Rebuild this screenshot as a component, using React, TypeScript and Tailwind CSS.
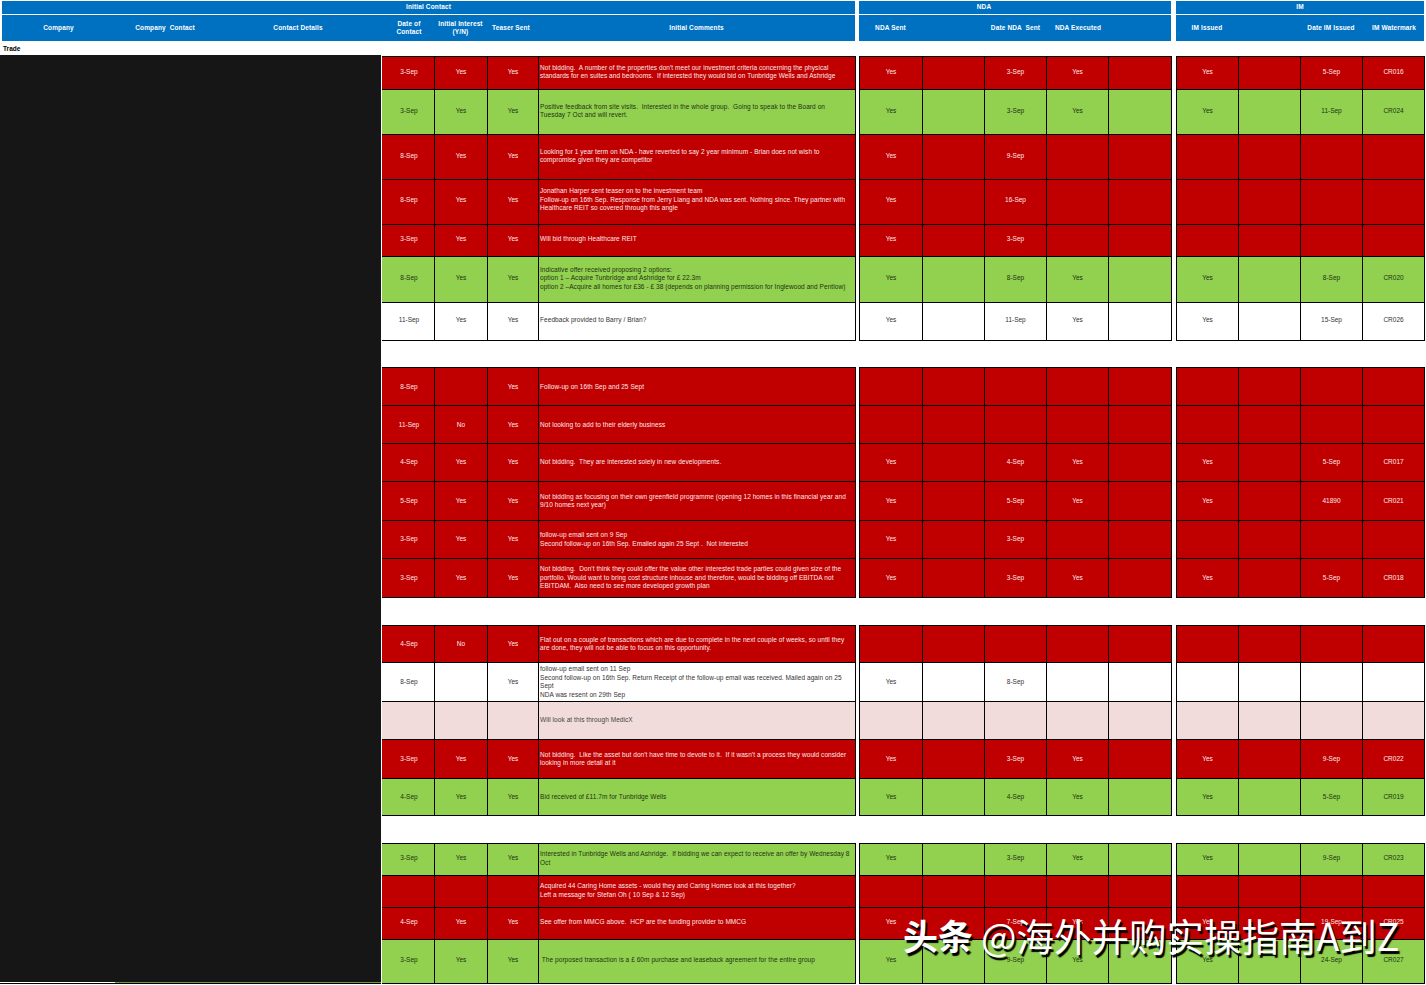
const FONT = "font-['Liberation_Sans',Arial,sans-serif]";

type Row = {
  h: string;
  t: "red" | "green" | "white" | "pink";
  c: string[];
  comment: string;
  n: string[];
  i: string[];
  o: string;
};

const tone = {
  red: "bg-[#c00000] text-[#fdeaea]",
  green: "bg-[#92d050] text-[#1d3310]",
  white: "bg-white text-[#333333]",
  pink: "bg-[#f2dcdb] text-[#444444]",
};

const mk = (
  h: string,
  t: Row["t"],
  c: string[],
  comment: string,
  n: string[] = ["", "", "", "", ""],
  i: string[] = ["", "", "", ""],
  o: string = "",
): Row => ({ h, t, c, comment, n, i, o });

const E5 = ["", "", "", "", ""];
const E4 = ["", "", "", ""];
const sections: { gap: string; rows: Row[] }[] = [
  {
    gap: "h-[26px]",
    rows: [
      mk("h-[34px]", "red", ["3-Sep", "Yes", "Yes"], "Not bidding.  A number of the properties don't meet our investment criteria concerning the physical\nstandards for en suites and bedrooms.  If interested they would bid on Tunbridge Wells and Ashridge", ["Yes", "", "3-Sep", "Yes", ""], ["Yes", "", "5-Sep", "CR016"], "pb-[2px]"),
      mk("h-[45px]", "green", ["3-Sep", "Yes", "Yes"], "Positive feedback from site visits.  Interested in the whole group.  Going to speak to the Board on\nTuesday 7 Oct and will revert.", ["Yes", "", "3-Sep", "Yes", ""], ["Yes", "", "11-Sep", "CR024"], "pb-[2px]"),
      mk("h-[45px]", "red", ["8-Sep", "Yes", "Yes"], "Looking for 1 year term on NDA - have reverted to say 2 year minimum - Brian does not wish to\ncompromise given they are competitor", ["Yes", "", "9-Sep", "", ""], E4, "pb-[2px]"),
      mk("h-[45px]", "red", ["8-Sep", "Yes", "Yes"], "Jonathan Harper sent teaser on to the investment team\nFollow-up on 16th Sep. Response from Jerry Liang and NDA was sent. Nothing since. They partner with\nHealthcare REIT so covered through this angle", ["Yes", "", "16-Sep", "", ""], E4, "pb-[4px]"),
      mk("h-[32px]", "red", ["3-Sep", "Yes", "Yes"], "Will bid through Healthcare REIT", ["Yes", "", "3-Sep", "", ""], E4, "pb-[2px]"),
      mk("h-[46px]", "green", ["8-Sep", "Yes", "Yes"], "Indicative offer received proposing 2 options:\noption 1 – Acquire Tunbridge and Ashridge for £ 22.3m\noption 2 –Acquire all homes for £36 - £ 38 (depends on planning permission for Inglewood and Pentlow)", ["Yes", "", "8-Sep", "Yes", ""], ["Yes", "", "8-Sep", "CR020"], "pb-[2px]"),
      mk("h-[38px]", "white", ["11-Sep", "Yes", "Yes"], "Feedback provided to Barry / Brian?", ["Yes", "", "11-Sep", "Yes", ""], ["Yes", "", "15-Sep", "CR026"], "pb-[2px]"),
    ],
  },
  {
    gap: "h-[27px]",
    rows: [
      mk("h-[39px]", "red", ["8-Sep", "", "Yes"], "Follow-up on 16th Sep and 25 Sept", E5, E4, "pt-[2px]"),
      mk("h-[38px]", "red", ["11-Sep", "No", "Yes"], "Not looking to add to their elderly business", E5, E4, "pt-[2px]"),
      mk("h-[38px]", "red", ["4-Sep", "Yes", "Yes"], "Not bidding.  They are interested solely in new developments.", ["Yes", "", "4-Sep", "Yes", ""], ["Yes", "", "5-Sep", "CR017"]),
      mk("h-[39px]", "red", ["5-Sep", "Yes", "Yes"], "Not bidding as focusing on their own greenfield programme (opening 12 homes in this financial year and\n9/10 homes next year)", ["Yes", "", "5-Sep", "Yes", ""], ["Yes", "", "41890", "CR021"]),
      mk("h-[38px]", "red", ["3-Sep", "Yes", "Yes"], "follow-up email sent on 9 Sep\nSecond follow-up on 16th Sep. Emailed again 25 Sept .  Not interested", ["Yes", "", "3-Sep", "", ""]),
      mk("h-[39px]", "red", ["3-Sep", "Yes", "Yes"], "Not bidding.  Don't think they could offer the value other interested trade parties could given size of the\nportfolio. Would want to bring cost structure inhouse and therefore, would be bidding off EBITDA not\nEBITDAM.  Also need to see more developed growth plan", ["Yes", "", "3-Sep", "Yes", ""], ["Yes", "", "5-Sep", "CR018"]),
    ],
  },
  {
    gap: "h-[27px]",
    rows: [
      mk("h-[38px]", "red", ["4-Sep", "No", "Yes"], "Flat out on a couple of transactions which are due to complete in the next couple of weeks, so until they\nare done, they will not be able to focus on this opportunity."),
      mk("h-[39px]", "white", ["8-Sep", "", "Yes"], "follow-up email sent on 11 Sep\nSecond follow-up on 16th Sep. Return Receipt of the follow-up email was received. Mailed again on 25\nSept\nNDA was resent on 29th Sep", ["Yes", "", "8-Sep", "", ""]),
      mk("h-[38px]", "pink", ["", "", ""], "Will look at this through MedicX"),
      mk("h-[39px]", "red", ["3-Sep", "Yes", "Yes"], "Not bidding.  Like the asset but don't have time to devote to it.  If it wasn't a process they would consider\nlooking in more detail at it", ["Yes", "", "3-Sep", "Yes", ""], ["Yes", "", "9-Sep", "CR022"]),
      mk("h-[37px]", "green", ["4-Sep", "Yes", "Yes"], "Bid received of £11.7m for Tunbridge Wells", ["Yes", "", "4-Sep", "Yes", ""], ["Yes", "", "5-Sep", "CR019"]),
    ],
  },
  {
    gap: "h-0",
    rows: [
      mk("h-[33px]", "green", ["3-Sep", "Yes", "Yes"], "Interested in Tunbridge Wells and Ashridge.  If bidding we can expect to receive an offer by Wednesday 8\nOct", ["Yes", "", "3-Sep", "Yes", ""], ["Yes", "", "9-Sep", "CR023"], "pb-[2px]"),
      mk("h-[32px]", "red", ["", "", ""], "Acquired 44 Caring Home assets - would they and Caring Homes look at this together?\nLeft a message for Stefan Oh ( 10 Sep & 12 Sep)", E5, E4, "pb-[2px]"),
      mk("h-[32px]", "red", ["4-Sep", "Yes", "Yes"], "See offer from MMCG above.  HCP are the funding provider to MMCG", ["Yes", "", "7-Sep", "Yes", ""], ["Yes", "", "19-Sep", "CR025"], "pb-[2px]"),
      mk("h-[44px]", "green", ["3-Sep", "Yes", "Yes"], " The porposed transaction is a £ 60m purchase and leaseback agreement for the entire group", ["Yes", "", "9-Sep", "Yes", ""], ["Yes", "", "24-Sep", "CR027"], "pb-[2px]"),
    ],
  },
];

function Cell({ w, o, children }: { w: string; o?: string; children?: React.ReactNode }) {
  return (
    <div className={`${w} ${o ?? ""} h-full shrink-0 flex items-center justify-center border-r border-black text-center`}>
      {children}
    </div>
  );
}

function DataRow({ row, first }: { row: Row; first: boolean }) {
  const nw = ["w-[63px]", "w-[62px]", "w-[62px]", "w-[62px]", "w-[63px]"];
  const iw = ["w-[62px]", "w-[62px]", "w-[62px]", "w-[62px]"];
  const top = first ? "border-t" : "";
  return (
    <div className={`${row.h} flex text-[6.5px] leading-[8.5px]`}>
      <div className={`flex h-full border-b border-black ${top} ${tone[row.t]}`}>
        <Cell w="w-[53px] pl-[2px]" o={row.o}>{row.c[0]}</Cell>
        <Cell w="w-[53px]" o={row.o}>{row.c[1]}</Cell>
        <Cell w="w-[51px]" o={row.o}>{row.c[2]}</Cell>
        <div className={`w-[317px] h-full flex items-center pl-[1px] border-r border-black whitespace-pre overflow-hidden tracking-[0.01em] ${row.o}`}>
          <div>{row.comment}</div>
        </div>
      </div>
      <div className="w-[3px] shrink-0" />
      <div className={`flex h-full border-b border-l border-black ${top} ${tone[row.t]}`}>
        {row.n.map((v, k) => (
          <Cell key={k} w={nw[k]} o={row.o}>{v}</Cell>
        ))}
      </div>
      <div className="w-[4px] shrink-0" />
      <div className={`flex h-full border-b border-l border-black ${top} ${tone[row.t]}`}>
        {row.i.map((v, k) => (
          <Cell key={k} w={iw[k]} o={row.o}>{v}</Cell>
        ))}
      </div>
    </div>
  );
}

function Head({ w, children }: { w: string; children?: React.ReactNode }) {
  return <div className={`${w} shrink-0 text-center whitespace-pre`}>{children}</div>;
}

export default function App() {
  return (
    <div className={`${FONT} relative w-[1426px] h-[985px] overflow-hidden bg-white`}>
      <div className="pt-[1px] pl-[2px] flex gap-[4px] font-bold text-[6.5px] leading-[8.5px] text-white tracking-[0.02em]">
        <div className="w-[853px]">
          <div className="h-[13px] bg-[#0070c0] flex items-center justify-center">Initial Contact</div>
          <div className="mt-[1px] h-[26px] bg-[#0070c0] flex items-center">
            <Head w="w-[113px]">Company</Head>
            <Head w="w-[100px]">Company  Contact</Head>
            <Head w="w-[166px]">Contact Details</Head>
            <Head w="w-[56px]">{"Date of\nContact"}</Head>
            <Head w="w-[47px]">{"Initial Interest\n(Y/N)"}</Head>
            <Head w="w-[54px]">Teaser Sent</Head>
            <Head w="w-[317px]">Initial Comments</Head>
          </div>
        </div>
        <div className="w-[312px]">
          <div className="h-[13px] bg-[#0070c0] flex items-center">
            <div className="w-[250px] text-center">NDA</div>
          </div>
          <div className="mt-[1px] h-[26px] bg-[#0070c0] flex items-center">
            <Head w="w-[63px]">NDA Sent</Head>
            <Head w="w-[62px]" />
            <Head w="w-[63px]">Date NDA  Sent</Head>
            <Head w="w-[62px]">NDA Executed</Head>
          </div>
        </div>
        <div className="ml-[1px] w-[248px]">
          <div className="h-[13px] bg-[#0070c0] flex items-center justify-center">IM</div>
          <div className="mt-[1px] h-[26px] bg-[#0070c0] flex items-center">
            <Head w="w-[62px]">IM Issued</Head>
            <Head w="w-[62px]" />
            <Head w="w-[62px]">Date IM Issued</Head>
            <Head w="w-[64px]">IM Watermark</Head>
          </div>
        </div>
      </div>

      <div className="h-[14px] pl-[3px] pt-[1px] flex items-center text-[6.5px] font-bold text-black">Trade</div>

      <div className="flex">
        <div className="w-[381px] shrink-0 flex flex-col">
          <div className="h-[927px] bg-[#161616]" />
          <div className="flex h-[2px] border-b border-black">
            <div className="w-[115px] bg-white" />
            <div className="w-[266px] bg-[#6f9f3c]" />
          </div>
        </div>
        <div className="pt-[1px] pl-[1px]">
          <div className="w-fit flex flex-col">
            {sections.map((s, si) => (
              <div key={si}>
                {s.rows.map((r, ri) => (
                  <DataRow key={ri} row={r} first={ri === 0} />
                ))}
                <div className={s.gap} />
              </div>
            ))}
          </div>
        </div>
      </div>

      <div className="absolute left-[903px] top-[912px] flex items-center gap-[8px] text-white font-['Noto_Sans_CJK_SC',sans-serif] leading-[46px] whitespace-nowrap [text-shadow:2px_3px_1px_#000]">
        <span className="font-bold text-[35px]">头条</span>
        <span className="font-normal text-[37.5px]">@海外并购实操指南A到Z</span>
      </div>
    </div>
  );
}
